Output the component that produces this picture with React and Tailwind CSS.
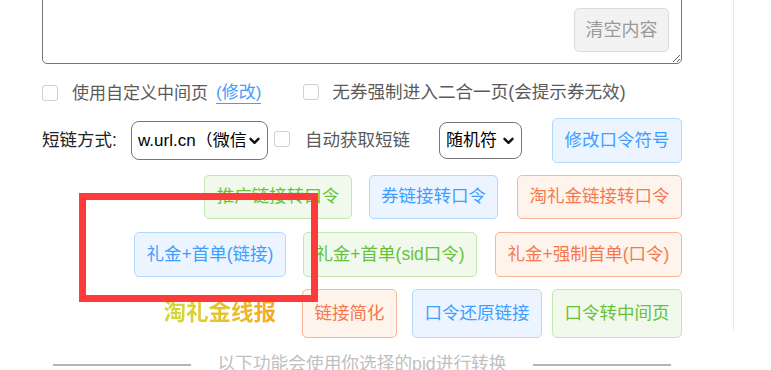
import React from "react";

const FONT = { fontFamily: '"Liberation Sans", "Noto Sans CJK SC", sans-serif' };

function Checkbox() {
  return (
    <span className="inline-block w-[16px] h-[16px] shrink-0 rounded-[3px] border border-[#cfd0d6] bg-white" />
  );
}

function Btn({ tone, w, h, children }) {
  const tones = {
    green: "bg-[#f0f9eb] border-[#c2e7b0] text-[#67c23a]",
    blue: "bg-[#ecf5ff] border-[#b3d8ff] text-[#409eff]",
    orange: "bg-[#fef4ec] border-[#fbb497] text-[#f7784f]",
  };
  return (
    <button
      className={`${tones[tone]} ${w} ${h} shrink-0 border rounded-[5px] text-[17.5px] leading-none flex items-center justify-center whitespace-nowrap`}
    >
      {children}
    </button>
  );
}

function Chevron() {
  return (
    <svg width="11" height="8" viewBox="0 0 11 8" className="shrink-0">
      <path d="M1.5 1.8 5.5 5.8 9.5 1.8" fill="none" stroke="#111" strokeWidth="2.4" strokeLinecap="round" strokeLinejoin="round" />
    </svg>
  );
}

export default function App() {
  return (
    <div className="relative w-[771px] h-[370px] overflow-hidden bg-white" style={FONT}>
      <div className="w-[734px] h-full border-r border-[#e8e8e8] pl-[42px] pr-[51px]">
        {/* textarea */}
        <div className="relative -mt-[40px] h-[104px]">
          <textarea className="block w-full h-full border border-[#767676] rounded-[5px] bg-white" />
          <button className="absolute right-[13px] bottom-[12px] w-[95px] h-[44px] rounded-[5px] border border-[#dcdcdc] bg-[#f2f2f2] text-[#9a9a9a] text-[18px] leading-none flex items-center justify-center">
            清空内容
          </button>
        </div>

        {/* row 1 */}
        <div className="mt-[17px] h-[24px] flex items-center text-[17px] text-[#5a5a5a] leading-none">
          <Checkbox />
          <span className="ml-[14px]">使用自定义中间页</span>
          <span className="ml-[8px] text-[#409eff] border-b border-[#409eff] pb-[2px] translate-y-[1px]">(修改)</span>
          <span className="ml-[42px]"><Checkbox /></span>
          <span className="ml-[13px] text-[17.6px]">无券强制进入二合一页(会提示券无效)</span>
        </div>

        {/* row 2 */}
        <div className="mt-[13px] h-[45px] flex items-center text-[17.5px] leading-none">
          <span className="text-[#222] w-[74px] whitespace-nowrap">短链方式:</span>
          <div className="ml-[15px] w-[137px] h-[39px] rounded-[8px] border border-[#767676] flex items-center pl-[6px] pr-[7px] text-black text-[17px]">
            <span className="whitespace-nowrap overflow-hidden flex-1">w.url.cn（微信</span>
            <Chevron />
          </div>
          <span className="ml-[6px]"><Checkbox /></span>
          <span className="ml-[15px] text-[#5a5a5a] whitespace-nowrap">自动获取短链</span>
          <div className="ml-[29px] w-[83px] h-[37px] rounded-[8px] border border-[#767676] flex items-center pl-[6px] pr-[7px] text-black text-[17px]">
            <span className="whitespace-nowrap flex-1">随机符</span>
            <Chevron />
          </div>
          <div className="ml-auto">
            <Btn tone="blue" w="w-[130px]" h="h-[45px]">修改口令符号</Btn>
          </div>
        </div>

        {/* row 3 */}
        <div className="mt-[12px] flex justify-end items-center">
          <Btn tone="green" w="w-[148px]" h="h-[44px]">推广链接转口令</Btn>
          <div className="w-[17px]" />
          <Btn tone="blue" w="w-[129px]" h="h-[44px]">券链接转口令</Btn>
          <div className="w-[19px]" />
          <Btn tone="orange" w="w-[165px]" h="h-[44px]">淘礼金链接转口令</Btn>
        </div>

        {/* row 4 */}
        <div className="mt-[13px] flex justify-end items-center">
          <Btn tone="blue" w="w-[152px]" h="h-[45px]">礼金+首单(链接)</Btn>
          <div className="w-[17px]" />
          <Btn tone="green" w="w-[174px]" h="h-[45px]">礼金+首单(sid口令)</Btn>
          <div className="w-[18px]" />
          <Btn tone="orange" w="w-[187px]" h="h-[45px]">礼金+强制首单(口令)</Btn>
        </div>

        {/* row 5 */}
        <div className="mt-[12px] flex justify-end items-center">
          <span className="text-[22.5px] font-bold leading-none bg-gradient-to-r from-[#cddc39] to-[#f6a821] bg-clip-text text-transparent">
            淘礼金线报
          </span>
          <div className="w-[26px]" />
          <Btn tone="orange" w="w-[95px]" h="h-[49px]">链接简化</Btn>
          <div className="w-[15px]" />
          <Btn tone="blue" w="w-[130px]" h="h-[49px]">口令还原链接</Btn>
          <div className="w-[10px]" />
          <Btn tone="green" w="w-[130px]" h="h-[49px]">口令转中间页</Btn>
        </div>

        {/* row 6 divider */}
        <div className="mt-[12px] h-[30px] flex items-center justify-center">
          <div className="w-[138px] h-[2px] bg-[#b5b5b5]" />
          <span className="mx-[27px] text-[17.7px] text-[#c0c0c0] leading-none whitespace-nowrap">
            以下功能会使用你选择的pid进行转换
          </span>
          <div className="w-[138px] h-[2px] bg-[#b5b5b5]" />
        </div>
      </div>

      {/* red annotation box */}
      <div className="absolute left-[79px] top-[193px] w-[239px] h-[109px] border-[7px] border-[#ff3a3a]" />
    </div>
  );
}
